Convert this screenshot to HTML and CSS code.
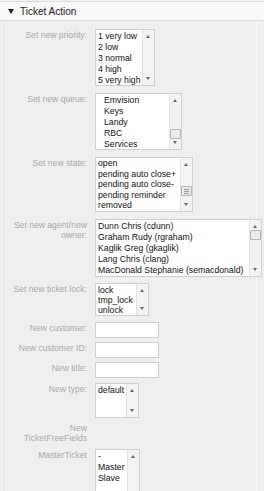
FILE: index.html
```html
<!DOCTYPE html>
<html lang="en">
<head>
    <meta charset="UTF-8">
    <title>Ticket Action</title>
    <link rel="stylesheet" href="styles.css">
</head>
<body>

<div class="widget">
    <div class="widget-header">
        <span class="toggle"></span>
        <span class="widget-title">Ticket Action</span>
    </div>

    <div class="widget-body">
        <div class="row gap-7">
            <div class="label">Set new priority:</div>
            <div class="listbox lb-priority">
                <div class="options">
                    <div>1 very low</div>
                    <div>2 low</div>
                    <div>3 normal</div>
                    <div>4 high</div>
                    <div>5 very high</div>
                </div>
                <div class="scrollbar"><span class="arrow-up"></span><span class="arrow-down"></span></div>
            </div>
        </div>

        <div class="row gap-7">
            <div class="label">Set new queue:</div>
            <div class="listbox lb-queue">
                <div class="options indent">
                    <div>Emvision</div>
                    <div>Keys</div>
                    <div>Landy</div>
                    <div>RBC</div>
                    <div>Services</div>
                </div>
                <div class="scrollbar">
                    <span class="arrow-up"></span>
                    <span class="thumb thumb-queue"></span>
                    <span class="arrow-down"></span>
                </div>
            </div>
        </div>

        <div class="row gap-7">
            <div class="label">Set new state:</div>
            <div class="listbox lb-state">
                <div class="options">
                    <div>open</div>
                    <div>pending auto close+</div>
                    <div>pending auto close-</div>
                    <div>pending reminder</div>
                    <div>removed</div>
                </div>
                <div class="scrollbar">
                    <span class="arrow-up"></span>
                    <span class="thumb thumb-state grip"></span>
                    <span class="arrow-down"></span>
                </div>
            </div>
        </div>

        <div class="row gap-6">
            <div class="label">Set new agent/new owner:</div>
            <div class="listbox lb-agent">
                <div class="options">
                    <div>Dunn Chris (cdunn)</div>
                    <div>Graham Rudy (rgraham)</div>
                    <div>Kaglik Greg (gkaglik)</div>
                    <div>Lang Chris (clang)</div>
                    <div>MacDonald Stephanie (semacdonald)</div>
                </div>
                <div class="scrollbar">
                    <span class="arrow-up"></span>
                    <span class="thumb thumb-agent"></span>
                    <span class="arrow-down"></span>
                </div>
            </div>
        </div>

        <div class="row gap-6">
            <div class="label">Set new ticket lock:</div>
            <div class="listbox lb-lock">
                <div class="options">
                    <div>lock</div>
                    <div>tmp_lock</div>
                    <div>unlock</div>
                </div>
                <div class="scrollbar"><span class="arrow-up"></span><span class="arrow-down"></span></div>
            </div>
        </div>

        <div class="row gap-4">
            <div class="label">New customer:</div>
            <input class="text-input" type="text">
        </div>

        <div class="row gap-4">
            <div class="label">New customer ID:</div>
            <input class="text-input" type="text">
        </div>

        <div class="row gap-5">
            <div class="label">New title:</div>
            <input class="text-input" type="text">
        </div>

        <div class="row gap-5">
            <div class="label">New type:</div>
            <div class="listbox lb-type">
                <div class="options">
                    <div>default</div>
                </div>
                <div class="scrollbar"><span class="arrow-up"></span><span class="arrow-down"></span></div>
            </div>
        </div>

        <div class="row gap-6">
            <div class="label label-only">New<br>TicketFreeFields</div>
        </div>

        <div class="row">
            <div class="label">MasterTicket</div>
            <div class="listbox lb-master">
                <div class="options">
                    <div>-</div>
                    <div>Master</div>
                    <div>Slave</div>
                </div>
                <div class="scrollbar"><span class="arrow-up"></span><span class="arrow-down"></span></div>
            </div>
        </div>
    </div>
</div>

</body>
</html>
```

FILE: styles.css
```css
body {
    margin: 0;
    padding: 0;
    background-color: #efefef;
    font-family: "Liberation Sans", Arial, sans-serif;
    overflow: hidden;
}

.widget {
    padding-top: 1px;
}

.widget-header {
    height: 18px;
    display: flex;
    align-items: center;
    background-color: #f8f8f8;
    border-top: 1px solid #dcdcdc;
    border-bottom: 1px solid #dcdcdc;
    padding-left: 8px;
}

.toggle {
    width: 0;
    height: 0;
    border-left: 3px solid transparent;
    border-right: 3px solid transparent;
    border-top: 5px solid #222;
    margin-right: 6px;
    margin-top: 1px;
}

.widget-title {
    font-size: 10px;
    color: #222;
}

.widget-body {
    margin-left: 3px;
    width: 252px;
    border-left: 1px solid #e2e2e2;
    border-right: 1px solid #fafafa;
    padding-top: 8px;
    height: 480px;
}

.row {
    display: flex;
    align-items: flex-start;
}

.gap-7 { margin-bottom: 7px; }
.gap-6 { margin-bottom: 6px; }
.gap-5 { margin-bottom: 5px; }
.gap-4 { margin-bottom: 4px; }

.label {
    width: 83px;
    flex-shrink: 0;
    padding-right: 8px;
    text-align: right;
    font-size: 8.6px;
    line-height: 10px;
    color: #a8a8a8;
    padding-top: 1px;
}

.label-only {
    padding-top: 0;
}

.listbox {
    display: flex;
    background-color: #fff;
    border: 1px solid #cfcfcf;
    flex-shrink: 0;
}

.options {
    flex: 1;
    padding: 1px 0 0 2px;
    font-size: 8.7px;
    line-height: 11px;
    color: #111;
    white-space: nowrap;
    overflow: hidden;
}

.options.indent {
    padding-left: 8px;
}

.scrollbar {
    width: 11px;
    position: relative;
    background-color: #f3f3f3;
    border-left: 1px solid #e4e4e4;
    flex-shrink: 0;
}

.arrow-up, .arrow-down {
    position: absolute;
    left: 3px;
    width: 0;
    height: 0;
    border-left: 2px solid transparent;
    border-right: 2px solid transparent;
}

.arrow-up {
    top: 5px;
    border-bottom: 3px solid #666;
}

.arrow-down {
    bottom: 5px;
    border-top: 3px solid #666;
}

.thumb {
    position: absolute;
    left: 0;
    width: 9px;
    height: 8px;
    background-color: #ececec;
    border: 1px solid #b4b4b4;
    border-radius: 1px;
}

.grip {
    background-image: linear-gradient(#9a9a9a, #9a9a9a), linear-gradient(#9a9a9a, #9a9a9a), linear-gradient(#9a9a9a, #9a9a9a);
    background-size: 5px 1px;
    background-repeat: no-repeat;
    background-position: 2px 2px, 2px 4px, 2px 6px;
}

.thumb-queue { top: 35px; }
.thumb-state { top: 28px; }
.thumb-agent { top: 10px; }

.lb-priority { width: 58px; height: 55px; }
.lb-queue { width: 85px; height: 55px; }
.lb-state { width: 96px; height: 53px; }
.lb-agent { width: 165px; height: 56px; }
.lb-lock { width: 52px; height: 31px; }
.lb-type { width: 42px; height: 33px; }
.lb-master { width: 43px; height: 60px; }

.lb-lock .options {
    line-height: 10px;
}

.lb-state .options {
    padding-top: 0;
    line-height: 10.5px;
}

.text-input {
    width: 62px;
    height: 14px;
    margin: 0;
    padding: 0;
    border: 1px solid #cfcfcf;
    background-color: #fff;
    box-sizing: content-box;
}
```
